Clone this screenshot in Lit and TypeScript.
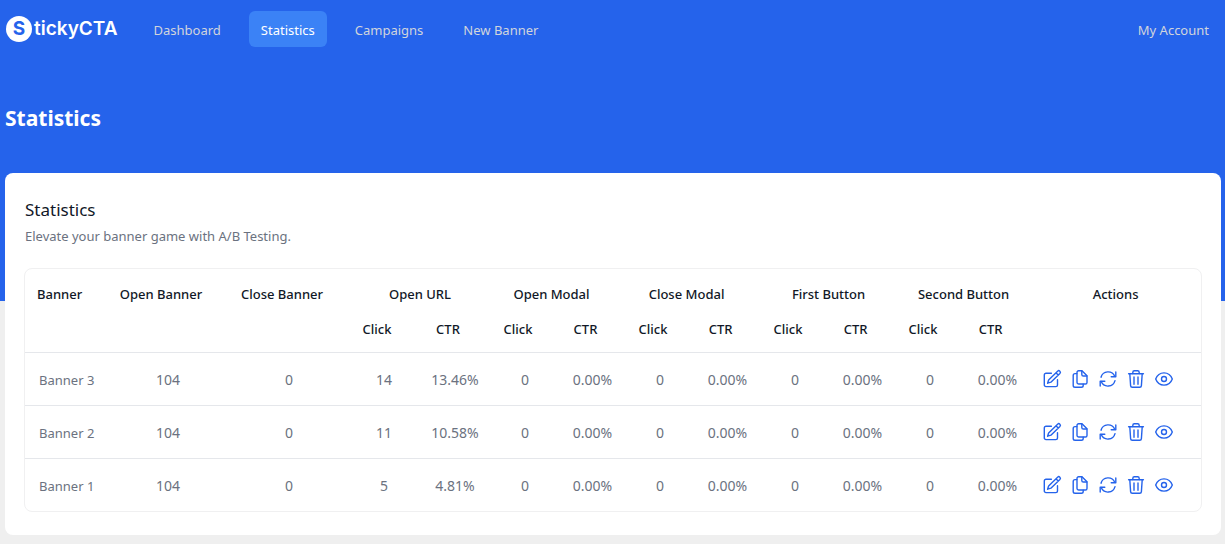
import { LitElement, html, css, svg } from "lit";
import { customElement, state } from "lit/decorators.js";

interface Metric {
  click: number;
  ctr: string;
}

interface BannerRow {
  name: string;
  open: number;
  close: number;
  metrics: Metric[];
}

const none: Metric = { click: 0, ctr: "0.00%" };

const icons = {
  edit: svg`<path d="M9.4 4.2H4A1.7 1.7 0 0 0 2.3 5.9V15.9A1.7 1.7 0 0 0 4 17.6H13.8A1.7 1.7 0 0 0 15.5 15.9V10.8"/><path d="M5.6 14.2L6.6 11L15.6 2.2A1.5 1.5 0 0 1 17.9 4.4L8.9 13.2L5.6 14.2M14 3.8L16.2 6"/>`,
  copy: svg`<path d="M12 1.8H8.6A1.6 1.6 0 0 0 7 3.4V13.2A1.8 1.8 0 0 0 8.8 15H15.4A1.6 1.6 0 0 0 17 13.4V6.8L12 1.8"/><path d="M11.8 2V5.4A1.6 1.6 0 0 0 13.4 7H16.8"/><path d="M6.8 4.6H5A1.8 1.8 0 0 0 3.2 6.4V16.4A1.8 1.8 0 0 0 5 18.2H11.4A1.8 1.8 0 0 0 13.2 16.4V15.2"/>`,
  refresh: svg`<path d="M3 8.2A7.3 7.3 0 0 1 16.8 7.4"/><path d="M17.8 3V7.8H13.2"/><path d="M17 11.6A7.3 7.3 0 0 1 3.2 12.6"/><path d="M2.2 17V12.2H6.8"/>`,
  remove: svg`<path d="M2.6 4.8H17.4"/><path d="M6.8 4.6V3.4A1.6 1.6 0 0 1 8.4 1.8H11.6A1.6 1.6 0 0 1 13.2 3.4V4.6"/><path d="M3.8 4.8L4.6 16.6A1.7 1.7 0 0 0 6.3 18.2H13.7A1.7 1.7 0 0 0 15.4 16.6L16.2 4.8"/><path d="M8 8V15.2M12 8V15.2"/>`,
  view: svg`<path d="M1.7 10C3.2 6 6.2 3.9 10 3.9S16.8 6 18.3 10C16.8 14 13.8 16.1 10 16.1S3.2 14 1.7 10Z"/><circle cx="10" cy="10" r="2.5"/>`,
};

const actions = [
  { label: "Edit", icon: icons.edit },
  { label: "Duplicate", icon: icons.copy },
  { label: "Reset", icon: icons.refresh },
  { label: "Delete", icon: icons.remove },
  { label: "Preview", icon: icons.view },
];

@customElement("app-nav")
export class AppNav extends LitElement {
  static styles = css`
    :host {
      display: block;
    }
    .bar {
      display: flex;
      align-items: center;
      height: 58px;
      color: #d1d5db;
    }
    .brand {
      display: flex;
      align-items: center;
      gap: 2px;
      margin-right: 24px;
      padding-left: 1px;
      color: #fff;
      text-decoration: none;
      font: 600 19px/26px Inter, sans-serif;
    }
    .mark {
      display: grid;
      place-items: center;
      width: 26px;
      height: 26px;
      border-radius: 50%;
      background: #fff;
      color: #2563eb;
      font-weight: 700;
    }
    .links {
      display: flex;
      flex: 1;
      gap: 16px;
    }
    .link {
      padding: 9px 12px 7px;
      border-radius: 6px;
      color: inherit;
      text-decoration: none;
      white-space: nowrap;
    }
    .active {
      background: #3b82f6;
      color: #fff;
    }
  `;

  private links = ["Dashboard", "Statistics", "Campaigns", "New Banner"];

  render() {
    return html`
      <nav class="bar" aria-label="Main">
        <a class="brand" href="#"><span class="mark">S</span><span>tickyCTA</span></a>
        <div class="links">
          ${this.links.map(
            (l) => html`<a class="link ${l === "Statistics" ? "active" : ""}" href="#">${l}</a>`
          )}
        </div>
        <a class="link" href="#">My Account</a>
      </nav>
    `;
  }
}

@customElement("stats-table")
export class StatsTable extends LitElement {
  static styles = css`
    :host {
      display: block;
      border: 1px solid #f0f0f1;
      border-radius: 8px;
      overflow: hidden;
    }
    .table {
      width: 100%;
      table-layout: fixed;
      border-collapse: separate;
      border-spacing: 0;
      text-align: center;
      color: #6b7280;
    }
    .name { width: 83px; }
    .open { width: 120px; }
    .close { width: 122px; }
    .click { width: 66px; }
    .ctr { width: 69px; }
    .click-url { width: 68px; }
    .ctr-url { width: 74px; }
    .actions { width: 169px; }
    th,
    td {
      padding: 0;
      white-space: nowrap;
    }
    th {
      color: #111827;
      font-weight: 500;
      padding: 15px 14px 0 0;
    }
    .group {
      padding-right: 16px;
    }
    .wide {
      padding-right: 2px;
    }
    .sub th {
      padding-bottom: 13px;
    }
    .first {
      text-align: left;
      padding-left: 14px;
    }
    th.first {
      padding-left: 12px;
    }
    td {
      height: 53px;
      padding-top: 2px;
      box-sizing: border-box;
      border-top: 1px solid #e5e7eb;
    }
    .num {
      font-size: 14px;
    }
    .tools {
      display: flex;
      gap: 8px;
      padding: 0 0 2px 10px;
    }
    .tool {
      display: block;
      width: 20px;
      height: 20px;
      padding: 0;
      border: 0;
      background: none;
      color: #2563eb;
      cursor: pointer;
    }
    .icon {
      display: block;
      width: 20px;
      height: 20px;
      fill: none;
      stroke: currentColor;
      stroke-width: 1.4;
      stroke-linecap: round;
      stroke-linejoin: round;
    }
  `;

  @state() private rows: BannerRow[] = [
    { name: "Banner 3", open: 104, close: 0, metrics: [{ click: 14, ctr: "13.46%" }, none, none, none, none] },
    { name: "Banner 2", open: 104, close: 0, metrics: [{ click: 11, ctr: "10.58%" }, none, none, none, none] },
    { name: "Banner 1", open: 104, close: 0, metrics: [{ click: 5, ctr: "4.81%" }, none, none, none, none] },
  ];

  private groups = [
    { label: "Open URL", kind: "wide", cols: "-url" },
    { label: "Open Modal", kind: "group", cols: "" },
    { label: "Close Modal", kind: "group", cols: "" },
    { label: "First Button", kind: "wide", cols: "" },
    { label: "Second Button", kind: "wide", cols: "" },
  ];

  render() {
    return html`
      <table class="table">
        <colgroup>
          <col class="name" />
          <col class="open" />
          <col class="close" />
          ${this.groups.map((g) => html`<col class="click${g.cols}" /><col class="ctr${g.cols}" />`)}
          <col class="actions" />
        </colgroup>
        <thead>
          <tr>
            <th class="first" scope="col">Banner</th>
            <th scope="col">Open Banner</th>
            <th scope="col">Close Banner</th>
            ${this.groups.map(
              (g) => html`<th class=${g.kind} colspan="2" scope="colgroup">${g.label}</th>`
            )}
            <th class="wide" scope="col">Actions</th>
          </tr>
          <tr class="sub">
            <th colspan="3"></th>
            ${this.groups.map(() => html`<th scope="col">Click</th><th scope="col">CTR</th>`)}
            <th></th>
          </tr>
        </thead>
        <tbody>
          ${this.rows.map(
            (r) => html`
              <tr>
                <td class="first">${r.name}</td>
                <td class="num">${r.open}</td>
                <td class="num">${r.close}</td>
                ${r.metrics.map((m) => html`<td class="num">${m.click}</td><td class="num">${m.ctr}</td>`)}
                <td>
                  <div class="tools">
                    ${actions.map(
                      (a) => html`<button class="tool" type="button" aria-label="${a.label} ${r.name}">
                        <svg class="icon" viewBox="0 0 20 20" aria-hidden="true">${a.icon}</svg>
                      </button>`
                    )}
                  </div>
                </td>
              </tr>
            `
          )}
        </tbody>
      </table>
    `;
  }
}

@customElement("app-root")
export class AppRoot extends LitElement {
  static styles = css`
    :host {
      display: block;
      min-height: 100vh;
      background: #efefef;
      font: 13px/20px "Noto Sans", "Open Sans", sans-serif;
    }
    .hero {
      padding: 0 4px 128px 5px;
      background: #2563eb;
    }
    .heading {
      margin: 0;
      padding: 42px 0 37px;
      color: #fff;
      font-size: 21px;
      line-height: 36px;
      font-weight: 700;
    }
    .main {
      margin-top: -128px;
      padding: 0 4px 9px 5px;
    }
    .card {
      padding: 24px 19px 23px;
      border-radius: 8px;
      background: #fff;
    }
    .title {
      margin: 0;
      color: #111827;
      font-size: 17px;
      line-height: 26px;
      font-weight: 400;
    }
    .lead {
      margin: 3px 0 22px;
      color: #6b7280;
    }
    .title,
    .lead {
      padding-left: 1px;
    }
  `;

  render() {
    return html`
      <header class="hero">
        <app-nav></app-nav>
        <h1 class="heading">Statistics</h1>
      </header>
      <main class="main">
        <section class="card" aria-labelledby="stats">
          <h2 class="title" id="stats">Statistics</h2>
          <p class="lead">Elevate your banner game with A/B Testing.</p>
          <stats-table></stats-table>
        </section>
      </main>
    `;
  }
}
